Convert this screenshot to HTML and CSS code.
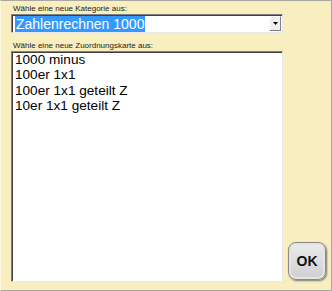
FILE: index.html
```html
<!DOCTYPE html>
<html lang="de">
  <head>
    <meta charset="UTF-8" />
    <title>Zuordnung</title>
    <link rel="stylesheet" href="styles.css">
  </head>
  <body>
    <div class="fenster">
      <div class="inhalt">
        <div class="links">
          <div class="label">Wähle eine neue Kategorie aus:</div>
          <div class="combo">
            <div class="combo-text"><span class="auswahl">Zahlenrechnen 1000</span></div>
            <div class="combo-knopf">
              <svg width="5" height="4" viewBox="0 0 5 4"><path d="M0 0H5L2.5 3Z" fill="#000"/></svg>
            </div>
          </div>
          <div class="label label2">Wähle eine neue Zuordnungskarte aus:</div>
          <div class="liste">
            <div class="eintrag">1000 minus</div>
            <div class="eintrag">100er 1x1</div>
            <div class="eintrag">100er 1x1 geteilt Z</div>
            <div class="eintrag">10er 1x1 geteilt Z</div>
          </div>
        </div>
        <div class="rechts">
          <button class="ok">OK</button>
        </div>
      </div>
    </div>
  </body>
</html>
```
FILE: styles.css
```css
*{
    margin: 0;
    padding: 0;
    box-sizing: border-box;
}

body{
    width: 332px;
    height: 291px;
    font-family: 'Liberation Sans', Arial, sans-serif;
}

.fenster{
    width: 332px;
    height: 291px;
    background-color: #f8eebf;
    border-top: 1px solid #a8a8a0;
    border-right: 1px solid #a8a8a0;
    border-bottom: 1px solid #a8a8a0;
    border-left: 1px solid #fbf6e0;
}

.inhalt{
    display: flex;
    height: 100%;
    padding: 3px 0 8px 10px;
}

.links{
    display: flex;
    flex-direction: column;
    width: 272px;
}

.label{
    font-size: 8px;
    color: #222;
    height: 10px;
    line-height: 10px;
    padding-left: 2px;
}

.label2{
    margin-top: 8px;
}

.combo{
    display: flex;
    height: 19px;
    background: #fff;
    border-top: 1px solid #808080;
    border-left: 1px solid #808080;
    border-right: 1px solid #e8e8e8;
    border-bottom: 1px solid #e8e8e8;
    box-shadow: inset 1px 1px 0 #404040;
    padding: 1px 1px 1px 3px;
}

.combo-text{
    flex: 1;
    font-size: 14px;
    line-height: 16px;
}

.auswahl{
    background: #3399ff;
    color: #fff;
    padding: 0 1px;
}

.combo-knopf{
    width: 12px;
    display: flex;
    align-items: center;
    justify-content: center;
    background: #f0f0f0;
    border-left: 1px solid #fff;
    border-top: 1px solid #fff;
    border-right: 1px solid #808080;
    border-bottom: 1px solid #808080;
}

.liste{
    flex: 1;
    background: #fff;
    border-top: 1px solid #808080;
    border-left: 1px solid #808080;
    border-right: 1px solid #e8e8e8;
    border-bottom: 1px solid #e8e8e8;
    box-shadow: inset 1px 1px 0 #404040;
    padding: 0 0 0 3px;
}

.eintrag{
    font-size: 13.6px;
    line-height: 15.3px;
    color: #000;
}

.rechts{
    flex: 1;
    display: flex;
    align-items: flex-end;
    justify-content: center;
    padding-bottom: 2px;
}

.ok{
    width: 38px;
    height: 38px;
    border-radius: 8px;
    border: 1px solid #8a8a8a;
    background: linear-gradient(#ececec, #cfcfcf);
    box-shadow: inset 0 0 0 2px #e4e4e4, 1px 1px 2px #777;
    font-family: 'Liberation Sans', Arial, sans-serif;
    font-weight: bold;
    font-size: 14px;
    color: #111;
}
```
